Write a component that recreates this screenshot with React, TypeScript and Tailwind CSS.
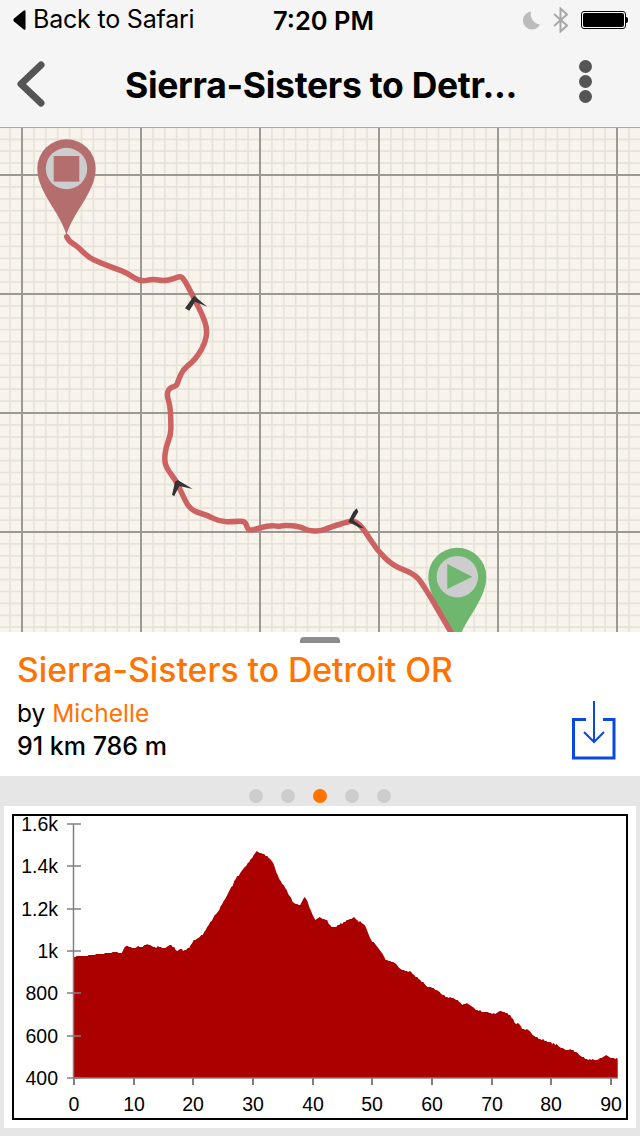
const ROUTE_POINTS: [number, number][] = [
  [66.7, 236.7], [69.3, 241.7], [76.7, 245.7], [88.3, 257.3], [100, 262.7], [116.7, 269], [126.7, 272.7], [140, 281.7],
  [153.3, 279], [163.3, 281], [173.3, 279], [180, 276], [184, 279], [193.3, 296.7], [203.3, 316.7], [207.3, 330],
  [205, 343.3], [198.3, 355], [191.7, 362.7], [183.3, 369.3], [178.3, 380], [176.7, 386], [169.3, 387.7], [166.7, 395],
  [170, 405], [171, 423.3], [170.7, 435], [166, 446.7], [164.3, 460], [166.7, 468.3], [176.7, 481.7], [181.7, 493.3],
  [190, 510], [206.7, 515], [220, 521.7], [233.3, 521.7], [245, 520.7], [247.3, 528.3], [250, 531], [270, 525],
  [278.3, 526.7], [285, 525], [300, 526.7], [308.3, 530.7], [320, 531.3], [330, 527.3], [348.3, 521.7], [355, 521],
  [363.3, 528.3], [376.7, 550], [393.3, 566], [413.3, 573.3], [423, 584], [452, 634],
];

const PROFILE_POINTS: [number, number][] = [
  [73.7, 956.7], [86.7, 955.7], [100, 954], [116.7, 952], [121.7, 953.3], [126, 945.3], [132.3, 948.3], [137.3, 946.7],
  [141.7, 947], [146.7, 944], [153.3, 946.7], [160, 947], [165.7, 948.7], [170, 944], [177.3, 950.7], [180.7, 949],
  [185, 950.7], [188.3, 948.3], [193.3, 941.3], [202.3, 935.3], [210, 922.7], [220, 908.3], [236.7, 877.3], [246.7, 865],
  [256.7, 851.3], [267.7, 856.7], [273.3, 863.3], [278.3, 877.3], [285, 887.3], [293.3, 902.7], [300, 905.3], [304, 897],
  [306.7, 900], [314.3, 919.3], [320, 917.3], [326.7, 920.7], [332.7, 927.7], [343.3, 922.7], [353.3, 917.3], [365, 925],
  [370, 938.3], [380, 950], [386, 960], [394, 962.3], [401.7, 970], [410, 971.7], [420, 980], [426.7, 986], [435, 989],
  [446.7, 997.3], [455, 998.3], [461.7, 1004.3], [468.3, 1003.3], [476.7, 1010], [495, 1014.3], [498.3, 1011.3],
  [505, 1011.7], [511.7, 1016.7], [515.7, 1025], [518.3, 1022.3], [522.3, 1029], [528.3, 1030], [535, 1037],
  [553.3, 1043.3], [563.3, 1049], [572.7, 1050.3], [586, 1059.3], [597.3, 1060], [606, 1055.3], [611.7, 1058.3],
  [617.7, 1058.7],
];

// rounds the corners of the traced route
function smoothPath(pts: [number, number][]) {
  let d = `M${pts[0][0]} ${pts[0][1]}`;
  for (let i = 1; i < pts.length - 1; i++) {
    const mx = (pts[i][0] + pts[i + 1][0]) / 2;
    const my = (pts[i][1] + pts[i + 1][1]) / 2;
    d += ` Q${pts[i][0]} ${pts[i][1]} ${mx} ${my}`;
  }
  const last = pts[pts.length - 1];
  return `${d} L${last[0]} ${last[1]}`;
}

// resamples the traced profile into small steps so the edge is rough like the plot
function roughProfile(pts: [number, number][]) {
  const out: string[] = ["73.7,1078"];
  let seg = 0;
  for (let x = pts[0][0]; x <= pts[pts.length - 1][0]; x += 1.5) {
    while (seg < pts.length - 2 && x > pts[seg + 1][0]) seg++;
    const [x0, y0] = pts[seg];
    const [x1, y1] = pts[seg + 1];
    const y = y0 + ((y1 - y0) * (x - x0)) / (x1 - x0);
    const wobble = x < 120 ? 0 : Math.sin(x * 2.3) * 0.5 + Math.sin(x * 0.9) * 0.4;
    out.push(`${x.toFixed(1)},${Math.round(y + wobble)}`);
  }
  out.push("617.7,1059", "617.7,1078");
  return out.join(" ");
}

const Y_TICKS = [
  { label: "1.6k", y: 824 },
  { label: "1.4k", y: 866 },
  { label: "1.2k", y: 909 },
  { label: "1k", y: 951 },
  { label: "800", y: 993 },
  { label: "600", y: 1036 },
  { label: "400", y: 1078 },
];

const X_TICKS = [
  { label: "0", x: 74 },
  { label: "10", x: 134 },
  { label: "20", x: 193 },
  { label: "30", x: 253 },
  { label: "40", x: 313 },
  { label: "50", x: 372 },
  { label: "60", x: 432 },
  { label: "70", x: 492 },
  { label: "80", x: 551 },
  { label: "90", x: 611 },
];

function StatusBar() {
  return (
    <div className="flex h-10 items-center justify-between pl-[13px] pr-3 text-black">
      <div className="flex w-[240px] items-center gap-[7px]">
        <svg width="13" height="20" viewBox="0 0 13 20">
          <path d="M12.5 1.5 V18.5 Q12.5 20.5 10.5 19.2 L1 11.4 Q-0.2 10 1 8.6 L10.5 0.8 Q12.5 -0.5 12.5 1.5 Z" fill="#000" />
        </svg>
        <span className="text-[25px] tracking-[-0.2px]">Back to Safari</span>
      </div>
      <span className="ml-[6px] mt-[2px] text-[25.5px] font-semibold">7:20 PM</span>
      <div className="flex w-[240px] items-center justify-end gap-[13px]">
        <svg width="18" height="19" viewBox="0 0 18 19">
          <path d="M9 0.5 A9 9 0 1 0 18 13.5 A10.5 10.5 0 0 1 9 0.5 Z" fill="#bcbcbc" />
        </svg>
        <svg width="15" height="26" viewBox="0 0 15 26" fill="none" stroke="#a8a8a8" strokeWidth="2">
          <path d="M1 7 L14 18.5 L7.5 24.5 V1.5 L14 7.5 L1 19" />
        </svg>
        <div className="flex items-center">
          <div className="flex h-[18px] w-[45px] rounded-[3px] border border-black bg-white p-px">
            <div className="flex-1 rounded-[2px] bg-black" />
          </div>
          <div className="h-[6px] w-[2px] rounded-r-sm bg-black" />
        </div>
      </div>
    </div>
  );
}

function NavBar() {
  return (
    <div className="flex h-[88px] items-center border-b border-[#a8a8a8] pl-[17px] pr-[48px]">
      <svg width="28" height="46" viewBox="0 0 28 46" fill="none" stroke="#555" strokeWidth="7" strokeLinecap="round" strokeLinejoin="round">
        <path d="M24 4 L4 23 L24 42" />
      </svg>
      <span className="ml-[80px] mt-[4px] text-[35.5px] font-bold tracking-[-0.3px] text-black">Sierra-Sisters to Detr...</span>
      <div className="mb-[5px] ml-auto flex flex-col gap-[2px]">
        <div className="h-[13px] w-[13px] rounded-full bg-[#555]" />
        <div className="h-[13px] w-[13px] rounded-full bg-[#555]" />
        <div className="h-[13px] w-[13px] rounded-full bg-[#555]" />
      </div>
    </div>
  );
}

function MapView() {
  const minorX = Array.from({ length: 55 }, (_, i) => 22 - 23.8 + i * 11.9);
  const minorY = Array.from({ length: 44 }, (_, i) => 127.4 + i * 11.9);
  const majorX = [22, 141, 260, 379, 498, 617];
  const majorY = [175, 294, 413, 532];
  return (
    <div className="h-[504px] overflow-hidden bg-[#f8f4ec]">
      <svg width="640" height="504" viewBox="0 128 640 504" className="block">
        {minorX.map((x) => (
          <line key={x} x1={x} x2={x} y1="128" y2="632" stroke="#e6e3db" strokeWidth="1.7" />
        ))}
        {minorY.map((y) => (
          <line key={y} x1="0" x2="640" y1={y} y2={y} stroke="#e6e3db" strokeWidth="1.7" />
        ))}
        {majorX.map((x) => (
          <line key={x} x1={x} x2={x} y1="128" y2="632" stroke="#9a9993" strokeWidth="2" />
        ))}
        {majorY.map((y) => (
          <line key={y} x1="0" x2="640" y1={y} y2={y} stroke="#9a9993" strokeWidth="2" />
        ))}

        {/* start pin sits under the route */}
        <path d="M457.3 643 C450 620 428.3 600 428.3 576.7 A29 29 0 1 1 486.3 576.7 C486.3 600 464 620 457.3 643 Z" fill="#6fb76f" />
        <circle cx="457.3" cy="576.7" r="20.7" fill="#cdcdcd" />
        <path d="M447.3 564 L472.3 576.7 L447.3 589 Z" fill="#6fb76f" />

        <path d={smoothPath(ROUTE_POINTS)} fill="none" stroke="#cd6262" strokeWidth="5.5" strokeLinejoin="round" strokeLinecap="round" />

        <g fill="#333">
          <polygon points="194,295.7 207.3,306.7 195,301.7 189.3,310.7 185,308.3" />
          <polygon points="177.7,480 192.7,489 179.3,486 174.3,496 172,495 175,481.7" />
          <polygon points="356.7,508.3 358.3,511.7 353.3,520 364,528.3 360,527.7 348.3,521.7 353.3,511.7" />
        </g>

        <path d="M66.5 235 C60 212 37.3 192 37.3 168.5 A29.2 29.2 0 1 1 95.7 168.5 C95.7 192 73 212 66.5 235 Z" fill="#b56e6e" />
        <circle cx="66.5" cy="168.5" r="20.7" fill="#cdcdcd" />
        <rect x="53.7" y="156" width="25.6" height="25.6" fill="#b56e6e" />
      </svg>
    </div>
  );
}

function InfoSheet() {
  return (
    <div className="relative h-[144px] bg-white pl-[17px] pt-[18px]">
      <div className="absolute left-[300px] top-[5px] h-[6px] w-10 rounded-t-[4px] bg-[#8c8c8c]" />
      <div className="text-[33.7px] font-medium leading-[40px] text-[#ff7300]">Sierra-Sisters to Detroit OR</div>
      <div className="mt-[7px] text-[24.5px] leading-[32px] text-black">
        by <span className="text-[#ff7300]">Michelle</span>
      </div>
      <div className="text-[25px] font-medium leading-[34px] text-black">91 km 786 m</div>
      <svg className="absolute left-[570px] top-[68px]" width="48" height="62" viewBox="570 700 48 62" fill="none" stroke="#0a48e0">
        <path d="M586 719.5 H573.5 V758 H614 V719.5 H603" strokeWidth="3" />
        <path d="M594 701 V742 M584 732 L594 742 L604 732" strokeWidth="2" />
      </svg>
    </div>
  );
}

function PageDots() {
  return (
    <div className="flex h-[30px] items-center justify-center gap-[18px] pt-[10px]">
      <div className="h-[14px] w-[14px] rounded-full bg-[#cdcdcd]" />
      <div className="h-[14px] w-[14px] rounded-full bg-[#cdcdcd]" />
      <div className="h-[14px] w-[14px] rounded-full bg-[#ff7300]" />
      <div className="h-[14px] w-[14px] rounded-full bg-[#cdcdcd]" />
      <div className="h-[14px] w-[14px] rounded-full bg-[#cdcdcd]" />
    </div>
  );
}

function ElevationChart() {
  return (
    <div className="mx-1 h-[322px] bg-white p-2">
      <div className="h-[306px] border-2 border-black">
        <svg width="612" height="302" viewBox="14 816 612 302" className="block overflow-visible font-['Liberation_Sans',sans-serif]">
          <polygon points={roughProfile(PROFILE_POINTS)} fill="#ab0000" />
          <g stroke="#808080" strokeWidth="1.5">
            <line x1="73.5" x2="73.5" y1="824" y2="1078" />
            <line x1="73.5" x2="618" y1="1078" y2="1078" />
            {Y_TICKS.map((t) => (
              <line key={t.label} x1="67" x2="81" y1={t.y} y2={t.y} />
            ))}
            {X_TICKS.map((t) => (
              <line key={t.label} x1={t.x} x2={t.x} y1="1078" y2="1085" strokeWidth="2" />
            ))}
          </g>
          <g fill="#000" fontSize="19.5">
            {Y_TICKS.map((t) => (
              <text key={t.label} x="58" y={t.y + 7} textAnchor="end">
                {t.label}
              </text>
            ))}
            {X_TICKS.map((t) => (
              <text key={t.label} x={t.x} y="1111" textAnchor="middle">
                {t.label}
              </text>
            ))}
          </g>
        </svg>
      </div>
    </div>
  );
}

export default function App() {
  return (
    <div className="flex h-[1136px] w-[640px] flex-col overflow-hidden bg-[#f5f5f5] font-['Inter',sans-serif]">
      <StatusBar />
      <NavBar />
      <MapView />
      <InfoSheet />
      <div className="flex-1 bg-[#e6e6e6]">
        <PageDots />
        <ElevationChart />
      </div>
    </div>
  );
}
